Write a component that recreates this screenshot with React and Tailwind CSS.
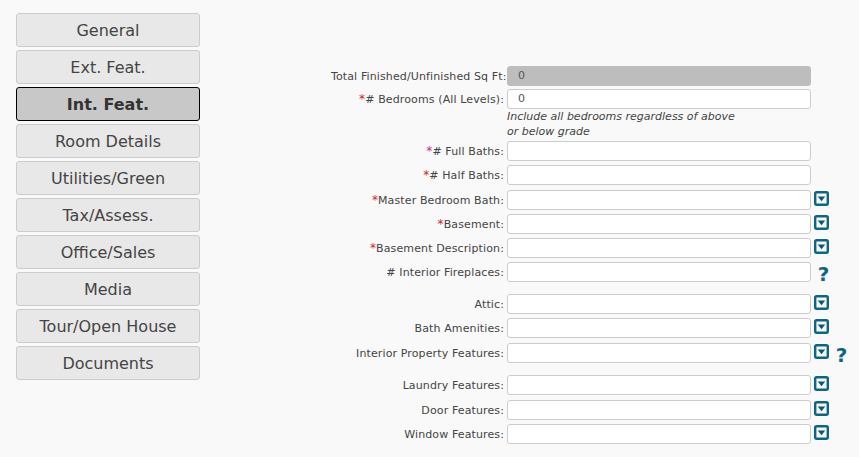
import React from "react";

const tabs = [
  "General",
  "Ext. Feat.",
  "Int. Feat.",
  "Room Details",
  "Utilities/Green",
  "Tax/Assess.",
  "Office/Sales",
  "Media",
  "Tour/Open House",
  "Documents",
];

const DropIcon = () => (
  <svg width="15" height="15" viewBox="0 0 15 15" className="block">
    <rect x="1.2" y="1.2" width="12.6" height="12.6" rx="1.5" fill="#f4f8fa" stroke="#0b6584" strokeWidth="2.4" />
    <path d="M3.8 5.5h7.4L7.5 10.2z" fill="#0b5670" />
  </svg>
);

const Help = () => (
  <span className="block w-[15px] text-center text-[20px] leading-[20px] font-bold text-[#0b6584] translate-y-[2px]">?</span>
);

const Row = ({ star, starColor = "text-[#d3202a]", label, value, disabled, drop, help, mt = "mt-[5px]" }) => (
  <div className={`flex items-center ${mt}`}>
    <label className="w-[176px] flex-none text-right text-[11px] leading-[14px] tracking-[0.12px] text-[#444] whitespace-nowrap pr-[3px] pt-[1px]">
      {star && <span className={`${starColor} text-[12px]`}>*</span>}
      {label}:
    </label>
    <div
      className={`h-[20px] w-[304px] flex-none rounded-[3px] border text-[11px] flex items-center pl-[10px] text-[#555] ${
        disabled ? "bg-[#bdbdbd] border-[#bdbdbd]" : "bg-white border-[#ccc]"
      }`}
    >
      {value}
    </div>
    {drop && (
      <span className="ml-[3px] mt-[1px] flex-none self-start">
        <DropIcon />
      </span>
    )}
    {help && (
      <span className="ml-[5px] flex-none">
        <Help />
      </span>
    )}
  </div>
);

export default function App() {
  return (
    <div
      className="w-[859px] h-[457px] overflow-hidden bg-[#f9f9f9] flex"
      style={{ fontFamily: '"DejaVu Sans", Verdana, sans-serif' }}
    >
      <div className="w-[184px] flex-none ml-[16px] mt-[13px] flex flex-col gap-[3px]">
        {tabs.map((t) => (
          <div
            key={t}
            className={
              t === "Int. Feat."
                ? "h-[34px] pt-[1px] rounded-[3px] border border-black bg-[#c8c8c8] flex items-center justify-center text-[16px] font-bold text-[#333]"
                : "h-[34px] pt-[1px] rounded-[3px] border border-[#ccc] bg-[#e8e8e8] flex items-center justify-center text-[16px] text-[#444]"
            }
          >
            {t}
          </div>
        ))}
      </div>

      <div className="ml-[131px] pt-[66px] flex-1">
        <Row label="Total Finished/Unfinished Sq Ft" value="0" disabled mt="mt-0" />
        <Row star label="# Bedrooms (All Levels)" value="0" mt="mt-[3px]" />
        <div className="ml-[176px] text-[11px] italic leading-[15px] text-[#444]">
          Include all bedrooms regardless of above
          <br />
          or below grade
        </div>
        <Row star starColor="text-[#d3208a]" label="# Full Baths" mt="mt-[2px]" />
        <Row star label="# Half Baths" mt="mt-[4px]" />
        <Row star label="Master Bedroom Bath" drop />
        <Row star label="Basement" drop mt="mt-[4px]" />
        <Row star label="Basement Description" drop mt="mt-[4px]" />
        <Row label="# Interior Fireplaces" help mt="mt-[4px]" />
        <Row label="Attic" drop mt="mt-[12px]" />
        <Row label="Bath Amenities" drop mt="mt-[4px]" />
        <Row label="Interior Property Features" drop help />
        <Row label="Laundry Features" drop mt="mt-[12px]" />
        <Row label="Door Features" drop />
        <Row label="Window Features" drop mt="mt-[4px]" />
      </div>
    </div>
  );
}
